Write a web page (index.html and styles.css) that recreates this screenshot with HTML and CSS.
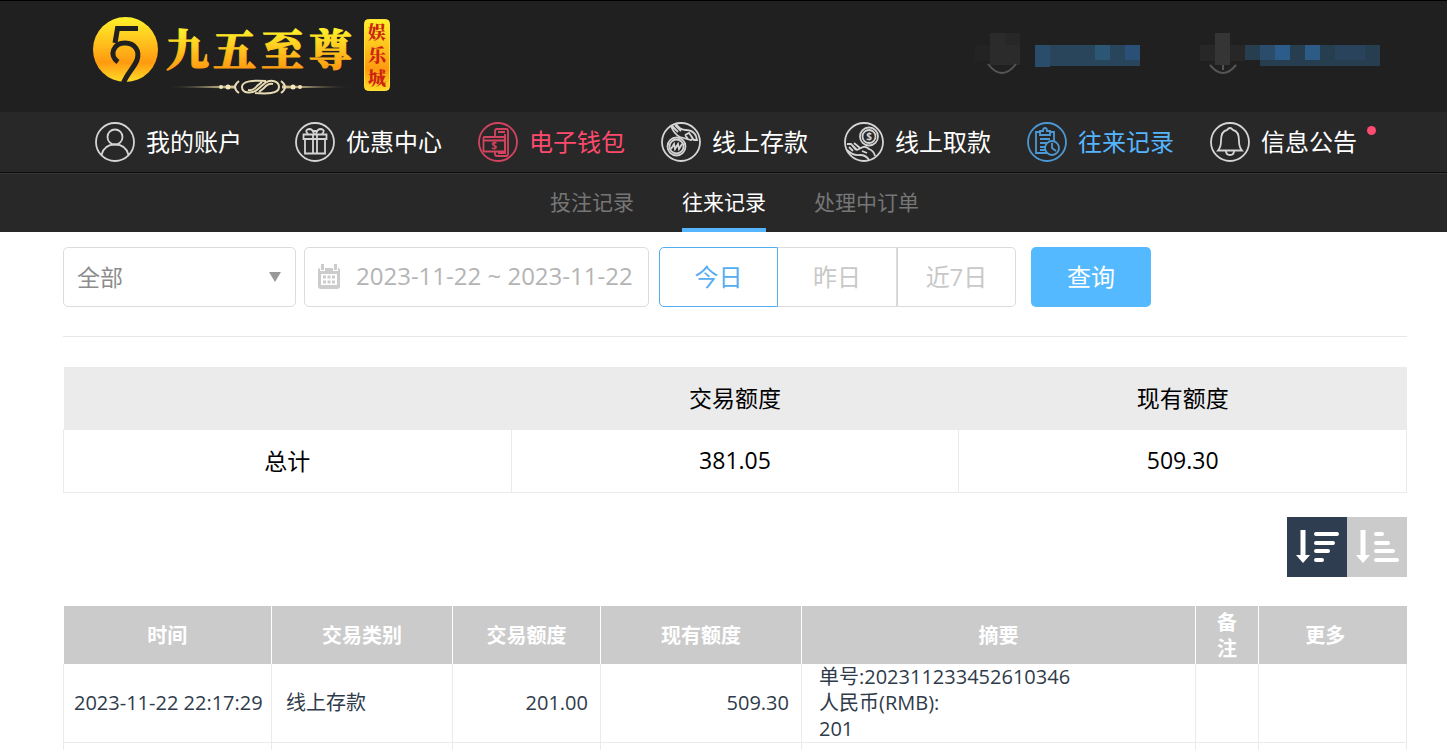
FILE: index.html
```html
<!DOCTYPE html>
<html lang="zh-CN">
<head>
    <meta charset="UTF-8">
    <meta name="viewport" content="width=device-width, initial-scale=1.0">
    <title>往来记录</title>
    <link rel="stylesheet" href="styles.css">
</head>
<body>
    <!-- Top bar: logo and user info -->
    <header class="topbar">
        <a href="#" class="logo">
            <svg width="304" height="84" viewBox="0 0 304 84">
                <defs>
                    <linearGradient id="gold" x1="0" y1="0" x2="0" y2="1">
                        <stop offset="0" stop-color="#fff22a"/>
                        <stop offset="0.35" stop-color="#ffc61e"/>
                        <stop offset="0.7" stop-color="#ff9a10"/>
                        <stop offset="1" stop-color="#ffdc28"/>
                    </linearGradient>
                    <linearGradient id="goldText" x1="0" y1="0" x2="0" y2="1">
                        <stop offset="0.2" stop-color="#fff22a"/>
                        <stop offset="0.9" stop-color="#ff9410"/>
                    </linearGradient>
                    <linearGradient id="line" x1="0" y1="0" x2="1" y2="0">
                        <stop offset="0" stop-color="#d8c48a" stop-opacity="0"/>
                        <stop offset="0.4" stop-color="#e6d7a4"/>
                        <stop offset="0.6" stop-color="#e6d7a4"/>
                        <stop offset="1" stop-color="#d8c48a" stop-opacity="0"/>
                    </linearGradient>
                </defs>
                <circle cx="35.500" cy="35.500" r="32.500" fill="url(#gold)"/>
                <g fill="none" stroke="#202020" stroke-width="5">
                    <path d="M48 14.500H27.500L25 29"/>
                    <path d="M28 48C18 41 24 29 35 29C45 29 50 37 47 46C44 54 37 59 33 70"/>
                </g>
                <text class="logo-name" x="76 123 171 219" y="52" fill="url(#goldText)" stroke="url(#goldText)">九五至尊</text>
                <path d="M76 73L145 71.500V74.500ZM262 73L192 71.500V74.500Z" fill="url(#line)"/>
                <g fill="#f3e7bb">
                    <circle cx="131" cy="73" r="2"/><circle cx="138" cy="73" r="2.500"/>
                    <circle cx="203" cy="73" r="2.500"/><circle cx="210" cy="73" r="2"/>
                </g>
                <g fill="none" stroke="#e8dcb4" stroke-width="2">
                    <path d="M149 67Q141 73 149 79M191 67Q199 73 191 79"/>
                    <path d="M176 67C163 66 152 67 152 73C152 80 163 80 168 75L175 69C181 65 189 67 189 73C189 80 176 80 165 79"/>
                    <path d="M158 76Q163 77 167 72L172 68M183 70Q178 69 174 74L169 78"/>
                </g>
                <rect x="274.500" y="5.500" width="25" height="71" rx="4" fill="url(#gold)" stroke="#ffe03a"/>
                <g class="logo-tag">
                    <text x="287" y="25">娱</text>
                    <text x="287" y="48">乐</text>
                    <text x="287" y="71">城</text>
                </g>
            </svg>
        </a>
        <!-- Masked account name and balance -->
        <svg class="user-info" width="405" height="46" viewBox="0 0 405 46">
            <path d="M0 15h15v16H0z" fill="#232323"/>
            <path d="M15 3h30v32H15z" fill="#2b2b2b"/>
            <path d="M30 3h15v12H30z" fill="#272727"/>
            <path d="M13 34Q27 52 41 34" fill="none" stroke="#555" stroke-width="2"/>
            <path d="M60 15h105v21H60z" fill="#29455c"/>
            <path d="M60 15h15v22H60z" fill="#294d6b"/>
            <path d="M120 15h15v15h-15z" fill="#2b5674"/>
            <path d="M150 15h15v15h-15z" fill="#2b5078"/>
            <path d="M225 15h45v16h-45z" fill="#272727"/>
            <path d="M240 3h15v32h-15z" fill="#353535"/>
            <path d="M235 35Q248 51 261 35M248 35v5" fill="none" stroke="#555" stroke-width="2"/>
            <path d="M270 15h135v21H285v-6h-15z" fill="#273e51"/>
            <path d="M285 15h15v15h-15z" fill="#2b4c6a"/>
            <path d="M300 15h15v15h-15z" fill="#2c5c8a"/>
            <path d="M330 15h15v15h-15z" fill="#2c5c86"/>
            <path d="M360 15h30v15h-30z" fill="#29435c"/>
        </svg>
    </header>

    <!-- Main navigation -->
    <nav class="main-nav">
        <a href="#" class="nav-item first">
            <svg class="icon" viewBox="0 0 40 40">
                <circle cx="20" cy="20" r="19"/><circle cx="20" cy="15" r="7.500"/>
                <path d="M6.500 33Q9 22.500 20 22.500T33.500 33"/>
            </svg>
            <span>我的账户</span>
        </a>
        <a href="#" class="nav-item">
            <svg class="icon" viewBox="0 0 40 40">
                <circle cx="20" cy="20" r="19"/>
                <path d="M8.500 12.500h23V17h-23zM10 17v14.500h20V17M18 12.500v19M22 12.500v19"/>
                <path d="M19 12Q18 7 14 7Q9 8 13 12M21 12Q22 7 26 7Q31 8 27 12M18 9h4"/>
            </svg>
            <span>优惠中心</span>
        </a>
        <a href="#" class="nav-item wallet">
            <svg class="icon" viewBox="0 0 40 40">
                <circle cx="20" cy="20" r="19"/>
                <path d="M17 14V9Q17 7 19 7H28Q30 7 30 9V32Q30 34 28 34H19Q17 34 17 32V30M20 10h7M20 31h7V28"/>
                <rect x="5.500" y="15" width="21.500" height="14.500" rx="1"/>
                <path d="M6 18.500h21M27 12V30"/>
                <text x="16" y="27">$</text>
            </svg>
            <span>电子钱包</span>
        </a>
        <a href="#" class="nav-item">
            <svg class="icon" viewBox="0 0 40 40">
                <circle cx="20" cy="20" r="19"/>
                <path d="M10 4Q13 12 19 15L26 17L30 18Q32 18 31 15M15 2Q19 8 25 8Q32 8 35 14L36 18L33 18L30 14M24 13L28 11L31 15M24 13L27 17M11 4L17 10M14 3L20 9"/>
                <circle cx="15.500" cy="24.500" r="9"/><circle cx="15.500" cy="24.500" r="7"/>
                <path d="M10 27l3-5l1 5l3-5l1 5l3-5"/>
            </svg>
            <span>线上存款</span>
        </a>
        <a href="#" class="nav-item">
            <svg class="icon" viewBox="0 0 40 40">
                <circle cx="20" cy="20" r="19"/>
                <circle cx="25" cy="14.500" r="9"/><circle cx="25" cy="14.500" r="6.500"/>
                <text x="25" y="18">$</text>
                <path d="M3 22L7 22L12 28M5 25L9 29M10 21L16 26M8 23L13 28L17 26Q21 23 25 27Q30 29 31 34M3 28Q9 34 16 33Q22 33 25 38M18 29L23 31"/>
            </svg>
            <span>线上取款</span>
        </a>
        <a href="#" class="nav-item active">
            <svg class="icon" viewBox="0 0 40 40">
                <circle cx="20" cy="20" r="19"/>
                <path d="M14 10H9V31H21M22 10H27V19M13 9H16Q16 6 18 6T20 9H23V13H13zM13 17h10M13 21h7M13 25h5M13 28h5"/>
                <circle cx="25" cy="26" r="7"/><path d="M25 21v5l4 3"/>
            </svg>
            <span>往来记录</span>
        </a>
        <a href="#" class="nav-item">
            <svg class="icon" viewBox="0 0 40 40">
                <circle cx="20" cy="20" r="19"/>
                <path d="M8 28.500Q11 25 11 19Q11 9 17 8Q20 4 23 8Q29 9 29 19Q29 25 32 28.500zM16 29Q16 33 20 33T24 29"/>
            </svg>
            <span>信息公告</span>
            <i class="dot"></i>
        </a>
    </nav>

    <nav class="sub-nav">
        <a href="#">投注记录</a>
        <a href="#" class="current">往来记录</a>
        <a href="#">处理中订单</a>
    </nav>

    <main class="content">
        <!-- Filters -->
        <form class="filters">
            <div class="field type-field">
                <select aria-label="交易类别">
                    <option>全部</option>
                </select>
                <svg class="arrow" width="12" height="10" viewBox="0 0 12 10"><path d="M0 0h12L6 10z" fill="#999"/></svg>
            </div>
            <div class="field date-field">
                <svg width="24" height="26" viewBox="0 0 24 26">
                    <path d="M3 4h18q2 0 2 2v16q0 3-3 3H4q-3 0-3-3V6q0-2 2-2z" fill="#ccc"/>
                    <path d="M4 10h16v11H4z" fill="#fff"/>
                    <path d="M5.500 0v7M18.500 0v7" stroke="#fff" stroke-width="5"/>
                    <path d="M5.500 0v6M18.500 0v6" stroke="#ccc" stroke-width="3"/>
                    <path d="M6 13h12M6 18h12" stroke="#ccc" stroke-width="3" stroke-dasharray="3 1.500"/>
                </svg>
                <input type="text" aria-label="日期" value="2023-11-22 ~ 2023-11-22" readonly>
            </div>
            <div class="day-group">
                <button type="button" class="selected">今日</button>
                <button type="button">昨日</button>
                <button type="button">近7日</button>
            </div>
            <button type="submit" class="search">查询</button>
        </form>

        <!-- Totals -->
        <table class="totals">
            <thead>
                <tr><th></th><th>交易额度</th><th>现有额度</th></tr>
            </thead>
            <tbody>
                <tr><td>总计</td><td>381.05</td><td>509.30</td></tr>
            </tbody>
        </table>

        <div class="sort">
            <button type="button" class="on" aria-label="降序">
                <svg width="60" height="60" viewBox="0 0 60 60">
                    <path d="M16 13v28" stroke-width="5"/><path d="M9 38h14l-7 8z" fill="#fff" stroke="none"/>
                    <path d="M29 17h21M29 26h17M29 34h12M29 43h6" stroke-width="4" stroke-linecap="round"/>
                </svg>
            </button>
            <button type="button" aria-label="升序">
                <svg width="60" height="60" viewBox="0 0 60 60">
                    <path d="M16 13v28" stroke-width="5"/><path d="M9 38h14l-7 8z" fill="#fff" stroke="none"/>
                    <path d="M29 17h6M29 26h12M29 34h17M29 43h21" stroke-width="4" stroke-linecap="round"/>
                </svg>
            </button>
        </div>

        <!-- Transaction records -->
        <table class="records">
            <colgroup>
                <col class="c-time"><col class="c-type"><col class="c-amount"><col class="c-balance">
                <col class="c-summary"><col class="c-note"><col class="c-more">
            </colgroup>
            <thead>
                <tr>
                    <th>时间</th>
                    <th>交易类别</th>
                    <th>交易额度</th>
                    <th>现有额度</th>
                    <th>摘要</th>
                    <th>备注</th>
                    <th class="more">更多</th>
                </tr>
            </thead>
            <tbody>
                <tr>
                    <td class="time">2023-11-22 22:17:29</td>
                    <td>线上存款</td>
                    <td class="num">201.00</td>
                    <td class="num">509.30</td>
                    <td class="summary">单号:202311233452610346<br>人民币(RMB):<br>201</td>
                    <td></td>
                    <td></td>
                </tr>
                <tr class="next"><td></td><td></td><td></td><td></td><td></td><td></td><td></td></tr>
            </tbody>
        </table>
    </main>
</body>
</html>
```
FILE: styles.css
```css
* {
    box-sizing: border-box;
}

body {
    margin: 0;
    background: #fff;
    color: #000;
    font-family: "Open Sans", "Noto Sans CJK SC", sans-serif;
}

a {
    text-decoration: none;
}

button,
select,
input {
    font-family: inherit;
}

/* Top bar */
.topbar {
    display: flex;
    justify-content: space-between;
    align-items: flex-start;
    height: 112px;
    padding: 13px 67px 0 90px;
    background: #202020;
    border-top: 1px solid #000;
}

.topbar svg {
    display: block;
}

.logo-name {
    font-size: 43px;
    font-weight: 900;
    font-family: "Noto Serif CJK SC", "Noto Sans CJK SC", serif;
}

.logo-tag {
    font-size: 18px;
    line-height: 18px;
    font-weight: 900;
    font-family: "Noto Serif CJK SC", "Noto Sans CJK SC", serif;
    fill: #cc2410;
    text-anchor: middle;
}

.user-info {
    margin-top: 16px;
}

/* Main navigation */
.main-nav {
    display: flex;
    align-items: center;
    gap: 36px;
    height: 61px;
    padding: 0 40px 0 95px;
    background: #282828;
    border-bottom: 1px solid #0c0c0c;
}

.nav-item {
    display: flex;
    align-items: center;
    gap: 11px;
    position: relative;
    color: #fff;
    font-size: 24px;
    line-height: 36px;
    white-space: nowrap;
}

.nav-item.first {
    margin-right: 17px;
}

.nav-item.wallet {
    color: #ff4a6e;
}

.nav-item.active {
    color: #55b5ff;
}

.icon {
    width: 40px;
    height: 40px;
    fill: none;
    stroke: currentColor;
    stroke-width: 1.8;
    opacity: 0.8;
}

.icon text {
    fill: currentColor;
    stroke: none;
    font-size: 10px;
    font-weight: bold;
    text-anchor: middle;
}

/* Unread mark */
.dot {
    position: absolute;
    top: 4px;
    right: -19px;
    width: 9px;
    height: 9px;
    border-radius: 50%;
    background: #ff4a72;
}

/* Second level navigation */
.sub-nav {
    display: flex;
    justify-content: center;
    gap: 48px;
    height: 59px;
    padding-left: 22px;
    background: #282828;
    border-top: 1px solid #363636;
}

.sub-nav a {
    color: #767676;
    font-size: 21px;
    line-height: 56px;
}

.sub-nav .current {
    color: #fff;
    border-bottom: 4px solid #55b5ff;
}

.content {
    padding: 15px 40px 0 63px;
}

/* Filters */
.filters {
    display: flex;
    height: 90px;
    border-bottom: 1px solid #e8e8e8;
}

.field {
    position: relative;
    display: flex;
    align-items: center;
    height: 60px;
    border: 1px solid #dcdcdc;
    border-radius: 5px;
}

.type-field {
    width: 233px;
    margin-right: 8px;
}

.type-field select {
    width: 100%;
    height: 100%;
    padding: 0 13px;
    border: none;
    background: none;
    appearance: none;
    color: #8c8c8c;
    font-size: 23px;
}

.arrow {
    position: absolute;
    right: 14px;
    pointer-events: none;
}

.date-field {
    gap: 15px;
    width: 345px;
    margin-right: 10px;
    padding: 0 0 0 12px;
}

.date-field input {
    flex: 1;
    min-width: 0;
    padding: 0 0 3px;
    border: none;
    outline: none;
    background: none;
    color: #b4b4b4;
    font-size: 24px;
}

.day-group {
    display: flex;
    margin-right: 15px;
}

.day-group button {
    width: 119px;
    height: 60px;
    padding: 0 0 3px;
    border: 1px solid #dcdcdc;
    background: #fff;
    color: #c8c8c8;
    font-size: 24px;
}

.day-group button:first-child {
    border-radius: 5px 0 0 5px;
}

.day-group button:nth-child(2) {
    border-left: none;
}

.day-group button:last-child {
    border-radius: 0 5px 5px 0;
    border-left-color: #d4d4d4;
}

.day-group .selected {
    border-color: #55aef0;
    color: #55aef0;
}

.search {
    width: 120px;
    height: 60px;
    padding: 0 0 3px;
    border: none;
    border-radius: 5px;
    background: #55b9ff;
    color: #fff;
    font-size: 24px;
}

/* Tables */
table {
    width: 100%;
    table-layout: fixed;
    border-collapse: collapse;
}

.totals {
    margin-top: 30px;
    font-size: 23px;
    text-align: center;
}

.totals th {
    height: 62px;
    padding: 0 0 1px;
    background: #ebebeb;
    font-weight: normal;
}

.totals td {
    height: 63px;
    padding: 0 0 1px;
    border: 1px solid #ebebeb;
}

.sort {
    display: flex;
    justify-content: flex-end;
    margin: 24px 0 29px;
}

.sort button {
    width: 60px;
    height: 60px;
    padding: 0;
    border: none;
    background: #cbcbcb;
}

.sort .on {
    background: #2f3d50;
}

.sort svg {
    display: block;
    fill: none;
    stroke: #fff;
}

.records {
    color: #2f3b4a;
    font-size: 20px;
    line-height: 26px;
}

.c-time { width: 208px; }
.c-type { width: 181px; }
.c-amount { width: 148px; }
.c-balance { width: 201px; }
.c-note { width: 63px; }
.c-more { width: 148px; }

.records th {
    height: 58px;
    padding: 4px 12px 2px;
    background: #cbcbcb;
    border-right: 1px solid #fff;
    color: #fff;
}

.records .more {
    padding-right: 27px;
    border-right: none;
}

.records td {
    height: 78px;
    padding: 0 12px 0 14px;
    border: 1px solid #ebebeb;
    border-top: none;
}

.records .time {
    padding: 0 0 0 10px;
    white-space: nowrap;
}

.records .num {
    text-align: right;
}

.records .summary {
    padding-left: 17px;
}

.records .next td {
    height: 8px;
    border-bottom: none;
}
```
